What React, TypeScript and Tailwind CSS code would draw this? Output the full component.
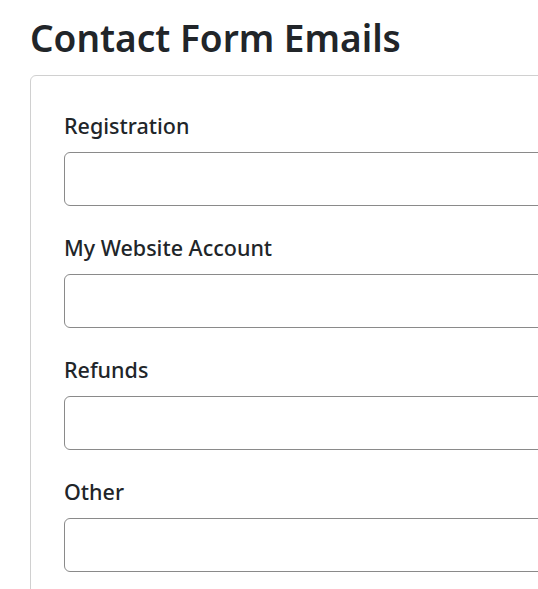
import React from 'react';

const fields = ['Registration', 'My Website Account', 'Refunds', 'Other'];

export default function App() {
  return (
    <div
      className="w-[538px] h-[589px] overflow-hidden bg-white pl-[30px] pt-[14px] text-[#212529]"
      style={{ fontFamily: '"Noto Sans", "Open Sans", sans-serif' }}
    >
      <h1 className="text-[37px] font-semibold leading-[48px] mb-[13px]">Contact Form Emails</h1>
      <div className="w-[640px] h-[600px] rounded-[6px] border border-[#d0d0d0] pl-[33px] pt-[36px]">
        <div className="flex flex-col gap-[28px]">
          {fields.map((f) => (
            <div key={f} className="flex flex-col">
              <label className="text-[21.5px] font-medium leading-[28px] mb-[12px]">{f}</label>
              <input
                type="text"
                className="h-[54px] w-full rounded-[6px] border border-[#8a8a8a] bg-white"
              />
            </div>
          ))}
        </div>
      </div>
    </div>
  );
}
